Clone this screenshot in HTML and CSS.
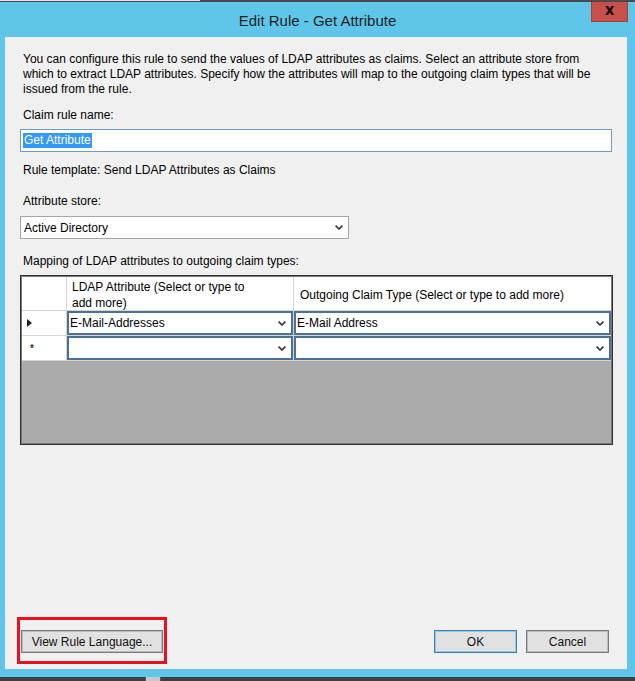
FILE: index.html
```html
<!DOCTYPE html>
<html lang="en">
<head>
<meta charset="utf-8">
<title>Edit Rule - Get Attribute</title>
<link rel="stylesheet" href="styles.css">
</head>
<body>
<div class="screen">
  <div class="topstrip"><span class="ts-left"></span><span class="ts-right"></span></div>
  <div class="titlebar">
    <div class="title">Edit Rule - Get Attribute</div>
    <div class="close">x</div>
  </div>
  <div class="frame">
    <div class="client">
      <p class="desc">You can configure this rule to send the values of LDAP attributes as claims. Select an attribute store from<br>which to extract LDAP attributes. Specify how the attributes will map to the outgoing claim types that will be<br>issued from the rule.</p>
      <div class="label label-name">Claim rule name:</div>
      <div class="textbox"><span class="selected">Get Attribute</span></div>
      <div class="label label-template">Rule template: Send LDAP Attributes as Claims</div>
      <div class="label label-store">Attribute store:</div>
      <div class="select">
        <span>Active Directory</span>
        <svg class="chev" width="8" height="5" viewBox="0 0 8 5"><polyline points="0.6,0.6 4,4 7.4,0.6" fill="none" stroke="#333" stroke-width="1.6"/></svg>
      </div>
      <div class="label label-map">Mapping of LDAP attributes to outgoing claim types:</div>
      <div class="grid">
        <div class="hcell rowhead"></div>
        <div class="hcell">LDAP Attribute (Select or type to<br>add more)</div>
        <div class="hcell hlast">Outgoing Claim Type (Select or type to add more)</div>

        <div class="rcell rowhead">
          <svg width="5" height="8" viewBox="0 0 5 8"><polygon points="0,0 5,4 0,8" fill="#222"/></svg>
        </div>
        <div class="rcell">
          <div class="combo"><span>E-Mail-Addresses</span>
            <svg class="chev" width="8" height="5" viewBox="0 0 8 5"><polyline points="0.6,0.6 4,4 7.4,0.6" fill="none" stroke="#333" stroke-width="1.6"/></svg>
          </div>
        </div>
        <div class="rcell rlast">
          <div class="combo"><span>E-Mail Address</span>
            <svg class="chev" width="8" height="5" viewBox="0 0 8 5"><polyline points="0.6,0.6 4,4 7.4,0.6" fill="none" stroke="#333" stroke-width="1.6"/></svg>
          </div>
        </div>

        <div class="rcell rowhead star">*</div>
        <div class="rcell">
          <div class="combo"><span></span>
            <svg class="chev" width="8" height="5" viewBox="0 0 8 5"><polyline points="0.6,0.6 4,4 7.4,0.6" fill="none" stroke="#333" stroke-width="1.6"/></svg>
          </div>
        </div>
        <div class="rcell rlast">
          <div class="combo"><span></span>
            <svg class="chev" width="8" height="5" viewBox="0 0 8 5"><polyline points="0.6,0.6 4,4 7.4,0.6" fill="none" stroke="#333" stroke-width="1.6"/></svg>
          </div>
        </div>
      </div>
      <div class="bottom">
        <div class="highlight"><div class="btn btn-rule">View Rule Language...</div></div>
        <div class="actions">
          <div class="btn btn-ok">OK</div>
          <div class="btn btn-cancel">Cancel</div>
        </div>
      </div>
    </div>
  </div>
  <div class="bottomstrip"><span class="bs-a"></span><span class="bs-b"></span><span class="bs-c"></span></div>
</div>
</body>
</html>
```

FILE: styles.css
```css
html, body {
  margin: 0;
  padding: 0;
}
body {
  width: 635px;
  height: 681px;
  overflow: hidden;
  font-family: "Liberation Sans", Arial, sans-serif;
  font-size: 12px;
  color: #000;
}
.screen {
  width: 635px;
  height: 681px;
  display: flex;
  flex-direction: column;
  background: #5fc6ea;
}
.topstrip {
  height: 2px;
  display: flex;
}
.ts-left {
  width: 200px;
  background: linear-gradient(#e4e4e4 0 1px, #4a4a4a 1px);
}
.ts-right {
  flex: 1;
  background: #4a4a4a;
}
.titlebar {
  height: 35px;
  display: grid;
  grid-template-columns: 1fr auto 1fr;
}
.title {
  grid-column: 2;
  align-self: center;
  font-size: 15px;
  color: #1e1e1e;
  padding-top: 1px;
}
.close {
  grid-column: 3;
  justify-self: end;
  align-self: start;
  width: 37px;
  height: 20px;
  margin-right: 7px;
  background: #c7504b;
  border: 1px solid #a8413d;
  border-top: none;
  box-sizing: border-box;
  display: flex;
  align-items: center;
  justify-content: center;
  font-family: "DejaVu Sans", "Liberation Sans", sans-serif;
  font-weight: bold;
  font-size: 15px;
  color: #111;
  line-height: 1;
  padding-bottom: 3px;
}
.frame {
  height: 632px;
  padding: 0 8px 0 5px;
}
.client {
  height: 100%;
  box-sizing: border-box;
  background: #f0f0f0;
  padding: 15px 15px 5px 15px;
  display: flex;
  flex-direction: column;
}
.desc {
  margin: 0 0 0 3px;
  line-height: 15px;
  white-space: nowrap;
}
.label {
  line-height: 15px;
  margin-left: 3px;
}
.label-name { margin-top: 11px; }
.label-template { margin-top: 11px; }
.label-store { margin-top: 16px; }
.label-map { margin-top: 15px; }
.textbox {
  margin-top: 6px;
  height: 23px;
  box-sizing: border-box;
  border: 1px solid #6f9bc6;
  background: #fff;
  display: flex;
  align-items: center;
  padding-left: 2px;
}
.selected {
  background: #3399ff;
  color: #fff;
  line-height: 15px;
  padding: 0 1px;
}
.select {
  margin-top: 7px;
  width: 329px;
  height: 23px;
  box-sizing: border-box;
  border: 1px solid #a5a5a5;
  background: #fff;
  display: flex;
  align-items: center;
  justify-content: space-between;
  padding: 0 5px 0 3px;
}
.grid {
  margin-top: 6px;
  margin-right: -1px;
  height: 170px;
  box-sizing: border-box;
  border: 1px solid #2e2e2e;
  box-shadow: inset 0 0 0 1px #7a7a7a;
  padding: 1px;
  background: #ababab;
  display: grid;
  grid-template-columns: 45px 227px 1fr;
  grid-template-rows: 34px 25px 25px;
  align-content: start;
}
.hcell {
  background: #fff;
  border-right: 1px solid #d5d5d5;
  border-bottom: 1px solid #d5d5d5;
  line-height: 16px;
  display: flex;
  align-items: center;
  padding-left: 5px;
  padding-top: 2px;
}
.hcell.rowhead { padding: 0; }
.hcell.hlast { border-right: none; padding-left: 6px; }
.rcell {
  background: #fff;
  border-right: 1px solid #d5d5d5;
  border-bottom: 1px solid #d5d5d5;
  display: flex;
}
.rcell.rlast { border-right: none; }
.rcell.rowhead {
  align-items: center;
  padding-left: 5px;
}
.rcell.star {
  font-size: 10px;
  padding-left: 8px;
  font-weight: bold;
  color: #333;
}
.combo {
  flex: 1;
  border: 2px solid #4d7196;
  background: #fff;
  display: flex;
  align-items: center;
  justify-content: space-between;
  padding: 0 5px 0 1px;
}
.bottom {
  margin-top: auto;
  display: flex;
  justify-content: space-between;
  align-items: flex-end;
  margin-left: -3px;
}
.highlight {
  border: 3px solid #e8111d;
  padding: 10px 1px 8px 1px;
}
.btn {
  height: 23px;
  box-sizing: border-box;
  background: #e1e1e1;
  display: flex;
  align-items: center;
  justify-content: center;
  color: #111;
}
.btn-rule {
  width: 142px;
  border: 1px solid #7a7a7a;
  box-shadow: inset 0 0 0 1px #bcbcbc;
}
.actions {
  display: flex;
  gap: 9px;
  margin-right: 3px;
  margin-bottom: 11px;
}
.btn-ok {
  width: 83px;
  border: 1px solid #3c7fb1;
  box-shadow: inset 0 0 0 1px #9cc4e6;
}
.btn-cancel {
  width: 83px;
  border: 1px solid #7a7a7a;
  box-shadow: inset 0 0 0 1px #bcbcbc;
}
.bottomstrip {
  margin-top: 8px;
  height: 4px;
  display: flex;
}
.bs-a { width: 145px; background: #3f3f3f; }
.bs-b { width: 16px; background: #c8c8c8; border-left: 1px solid #555; border-right: 1px solid #555; box-sizing: border-box; }
.bs-c { flex: 1; background: #3f3f3f; }
```
